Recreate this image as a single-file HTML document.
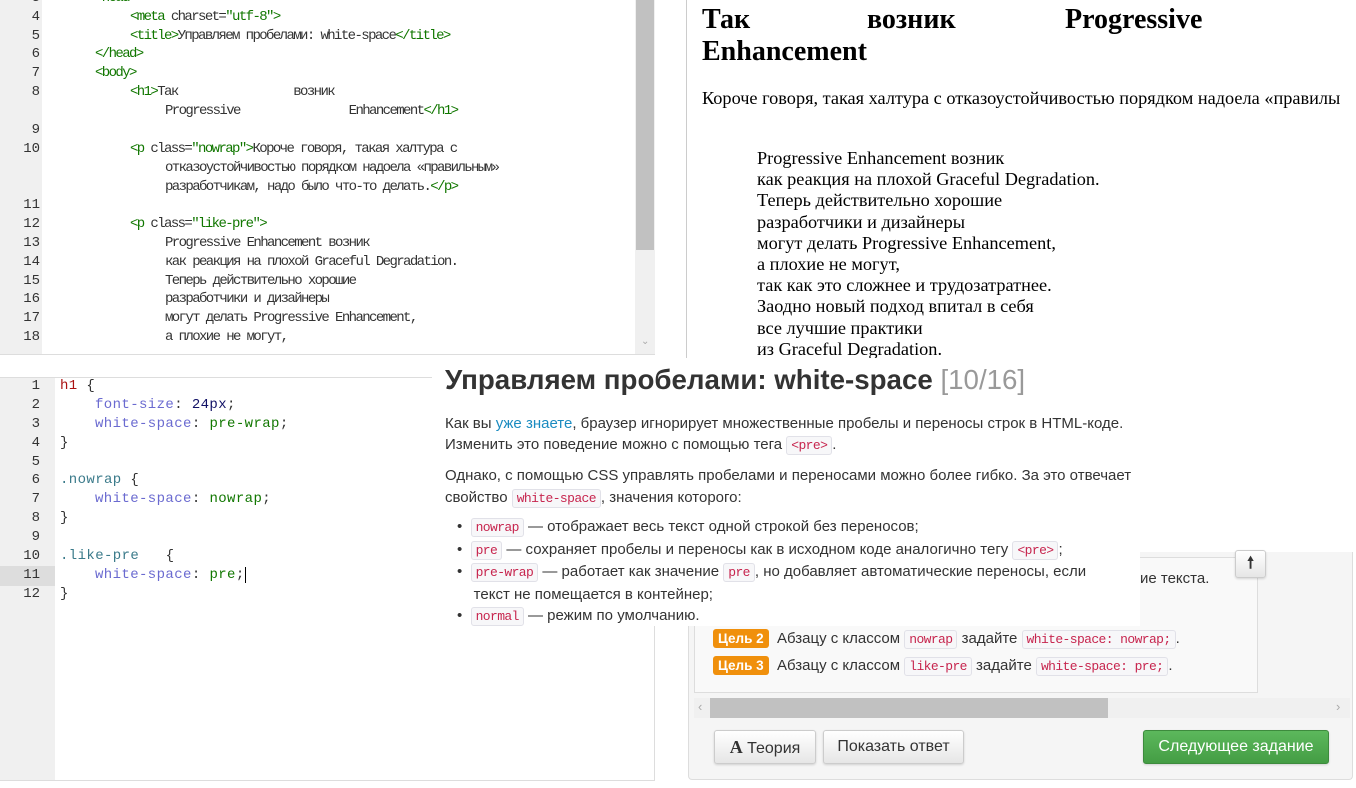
<!DOCTYPE html>
<html><head><meta charset="utf-8"><style>
*{margin:0;padding:0;box-sizing:border-box}
body{width:1356px;height:788px;background:#fff;position:relative;overflow:hidden;font-family:"Liberation Sans","Noto Sans CJK SC",sans-serif;color:#333}
.a{position:absolute;white-space:pre}
.m{font-family:"Liberation Mono","Noto Sans CJK SC",monospace;font-size:14px;letter-spacing:-1.6px}
.ln{position:absolute;width:40px;text-align:right;color:#333;letter-spacing:0}
.tg{color:#117700}
code{font-family:"Liberation Mono",monospace;font-size:13px;letter-spacing:-0.6px;color:#c7254e;border:1px solid #e1e1e8;border-radius:3px;padding:1px 4px;background:#f7f7f9}
.p{font-size:15px;color:#333}
.btn{position:absolute;height:34px;border:1px solid #ccc;border-radius:3px;background:linear-gradient(#fff,#e6e6e6);font-size:16px;color:#333;text-align:center;line-height:32px;box-shadow:0 1px 2px rgba(0,0,0,.15)}
.goal{background:#f0900c;color:#fff;font-weight:bold;font-size:13.5px;padding:2px 5px;border-radius:3px}
.sf{font-family:'Liberation Serif',serif;color:#000}
</style></head><body>
<!-- top-left html editor -->
<div class="a" style="left:0;top:0;width:42px;height:355px;background:#f0f0f0"></div>
<div class="a" style="left:635px;top:0;width:20px;height:355px;background:#f0f0f0"></div>
<div class="a" style="left:636px;top:0;width:18px;height:250px;background:#c1c1c1"></div>
<div class="a" style="left:641px;top:336px;color:#aaa;font-size:10px">&#8964;</div>
<div class="a" style="left:0;top:354px;width:655px;height:1px;background:#ddd"></div>
<div class="m">
<div class="ln" style="top:-10px">3</div><div class="a tg" style="left:95px;top:-10px">&lt;head&gt;</div>
<div class="ln" style="top:9px">4</div><div class="a" style="left:130px;top:9px"><span class="tg">&lt;meta</span> charset=<span class="tg">"utf-8"</span><span class="tg">&gt;</span></div>
<div class="ln" style="top:28px">5</div><div class="a" style="left:130px;top:28px"><span class="tg">&lt;title&gt;</span>Управляем пробелами: white-space<span class="tg">&lt;/title&gt;</span></div>
<div class="ln" style="top:46px">6</div><div class="a tg" style="left:95px;top:46px">&lt;/head&gt;</div>
<div class="ln" style="top:65px">7</div><div class="a tg" style="left:95px;top:65px">&lt;body&gt;</div>
<div class="ln" style="top:84px">8</div><div class="a" style="left:130px;top:84px"><span class="tg">&lt;h1&gt;</span>Так                 возник</div>
<div class="a" style="left:165px;top:103px">Progressive                Enhancement<span class="tg">&lt;/h1&gt;</span></div>
<div class="ln" style="top:122px">9</div>
<div class="ln" style="top:141px">10</div><div class="a" style="left:130px;top:141px"><span class="tg">&lt;p</span> class=<span class="tg">"nowrap"</span><span class="tg">&gt;</span>Короче говоря, такая халтура с</div>
<div class="a" style="left:165px;top:160px">отказоустойчивостью порядком надоела «правильным»</div>
<div class="a" style="left:165px;top:179px">разработчикам, надо было что-то делать.<span class="tg">&lt;/p&gt;</span></div>
<div class="ln" style="top:197px">11</div>
<div class="ln" style="top:216px">12</div><div class="a" style="left:130px;top:216px"><span class="tg">&lt;p</span> class=<span class="tg">"like-pre"</span><span class="tg">&gt;</span></div>
<div class="ln" style="top:235px">13</div><div class="a" style="left:165px;top:235px">Progressive Enhancement возник</div>
<div class="ln" style="top:254px">14</div><div class="a" style="left:165px;top:254px">как реакция на плохой Graceful Degradation.</div>
<div class="ln" style="top:273px">15</div><div class="a" style="left:165px;top:273px">Теперь действительно хорошие</div>
<div class="ln" style="top:291px">16</div><div class="a" style="left:165px;top:291px">разработчики и дизайнеры</div>
<div class="ln" style="top:310px">17</div><div class="a" style="left:165px;top:310px">могут делать Progressive Enhancement,</div>
<div class="ln" style="top:329px">18</div><div class="a" style="left:165px;top:329px">а плохие не могут,</div>
</div>
<!-- css editor -->
<div class="a" style="left:0;top:377px;width:655px;height:1px;background:#ddd"></div>
<div class="a" style="left:0;top:378px;width:55px;height:402px;background:#f0f0f0"></div>
<div class="a" style="left:0;top:566px;width:55px;height:20px;background:#ddd"></div>
<div class="a" style="left:654px;top:378px;width:1px;height:402px;background:#ddd"></div>
<div class="a" style="left:0;top:780px;width:655px;height:1px;background:#ddd"></div>
<div class="m" style="font-size:14px;letter-spacing:0.4px">
<div class="ln" style="top:378px">1</div><div class="a" style="left:60px;top:378px"><span style="color:#a11">h1</span> {</div>
<div class="ln" style="top:397px">2</div><div class="a" style="left:95px;top:397px"><span style="color:#6a6ad0">font-size</span>: <span style="color:#116">24px</span>;</div>
<div class="ln" style="top:416px">3</div><div class="a" style="left:95px;top:416px"><span style="color:#6a6ad0">white-space</span>: <span class="tg">pre-wrap</span>;</div>
<div class="ln" style="top:435px">4</div><div class="a" style="left:60px;top:435px">}</div>
<div class="ln" style="top:454px">5</div>
<div class="ln" style="top:472px">6</div><div class="a" style="left:60px;top:472px"><span style="color:#3a7a8a">.nowrap</span> {</div>
<div class="ln" style="top:491px">7</div><div class="a" style="left:95px;top:491px"><span style="color:#6a6ad0">white-space</span>: <span class="tg">nowrap</span>;</div>
<div class="ln" style="top:510px">8</div><div class="a" style="left:60px;top:510px">}</div>
<div class="ln" style="top:529px">9</div>
<div class="ln" style="top:548px">10</div><div class="a" style="left:60px;top:548px"><span style="color:#3a7a8a">.like-pre</span>   {</div>
<div class="ln" style="top:567px">11</div><div class="a" style="left:95px;top:567px"><span style="color:#6a6ad0">white-space</span>: <span class="tg">pre</span>;<span style="border-left:1px solid #000"></span></div>
<div class="ln" style="top:586px">12</div><div class="a" style="left:60px;top:586px">}</div>
</div>
<!-- preview -->
<div class="a" style="left:686px;top:0;width:1px;height:360px;background:#ccc"></div>
<div class="a sf" style="left:702px;top:4px;font-weight:bold;font-size:28px">Так</div>
<div class="a sf" style="left:867px;top:4px;font-weight:bold;font-size:28px">возник</div>
<div class="a sf" style="left:1065px;top:4px;font-weight:bold;font-size:28px">Progressive</div>
<div class="a sf" style="left:702px;top:36px;font-weight:bold;font-size:28px">Enhancement</div>
<div class="a sf" style="left:702px;top:88px;font-size:18.3px">Короче говоря, такая халтура с отказоустойчивостью порядком надоела «правилы</div>
<div class="a sf" style="left:757px;top:148px;font-size:18.3px;line-height:21.2px">Progressive Enhancement возник
как реакция на плохой Graceful Degradation.
Теперь действительно хорошие
разработчики и дизайнеры
могут делать Progressive Enhancement,
а плохие не могут,
так как это сложнее и трудозатратнее.
Заодно новый подход впитал в себя
все лучшие практики
из Graceful Degradation.</div>
<!-- bottom right panel -->
<div class="a" style="left:688px;top:552px;width:665px;height:228px;background:#f5f5f5;border:1px solid #ddd;border-top:none;border-radius:0 0 4px 4px"></div>
<div class="a" style="left:694px;top:557px;width:564px;height:136px;background:#f9f9f9;border:1px solid #ddd"></div>
<div class="a p" style="left:1140px;top:570px">ие текста.</div>
<div class="btn" style="left:1235px;top:550px;width:31px;height:28px;line-height:26px;font-weight:bold">&#129045;</div>
<div class="a p" style="left:713px;top:629px;line-height:20px"><span class="goal">Цель 2</span>  Абзацу с классом <code>nowrap</code> задайте <code>white-space: nowrap;</code>.</div>
<div class="a p" style="left:713px;top:656px;line-height:20px"><span class="goal">Цель 3</span>  Абзацу с классом <code>like-pre</code> задайте <code>white-space: pre;</code>.</div>
<div class="a" style="left:694px;top:698px;width:656px;height:20px;background:#f0f0f0"></div>
<div class="a" style="left:710px;top:698px;width:398px;height:20px;background:#c1c1c1"></div>
<div class="a" style="left:698px;top:699px;color:#aaa;font-size:13px">‹</div>
<div class="a" style="left:1336px;top:699px;color:#aaa;font-size:13px">›</div>
<div class="btn" style="left:714px;top:730px;width:102px"><b style="font-family:'Liberation Serif',serif;font-size:18px">A</b> Теория</div>
<div class="btn" style="left:823px;top:730px;width:141px">Показать ответ</div>
<div class="btn" style="left:1143px;top:730px;width:186px;background:linear-gradient(#5cb85c,#449d44);border-color:#3d8b3d;color:#fff">Следующее задание</div>
<!-- overlay -->
<div class="a" style="left:432px;top:358px;width:708px;height:268px;background:#fff"></div>
<div class="a" style="left:445px;top:364px;font-size:27.7px;font-weight:bold;color:#333">Управляем пробелами: white-space <span style="font-weight:normal;color:#999">[10/16]</span></div>
<div class="a p" style="left:445px;top:413px;line-height:21px">Как вы <span style="color:#1a8bc0">уже знаете</span>, браузер игнорирует множественные пробелы и переносы строк в HTML-коде.
Изменить это поведение можно с помощью тега <code>&lt;pre&gt;</code>.</div>
<div class="a p" style="left:445px;top:465px;line-height:22px">Однако, с помощью CSS управлять пробелами и переносами можно более гибко. За это отвечает
свойство <code>white-space</code>, значения которого:</div>
<div class="a p" style="left:457px;top:516px;line-height:21.5px">•  <code>nowrap</code> — отображает весь текст одной строкой без переносов;
•  <code>pre</code> — сохраняет пробелы и переносы как в исходном коде аналогично тегу <code>&lt;pre&gt;</code>;
•  <code>pre-wrap</code> — работает как значение <code>pre</code>, но добавляет автоматические переносы, если
    текст не помещается в контейнер;
•  <code>normal</code> — режим по умолчанию.</div>
</body></html>
